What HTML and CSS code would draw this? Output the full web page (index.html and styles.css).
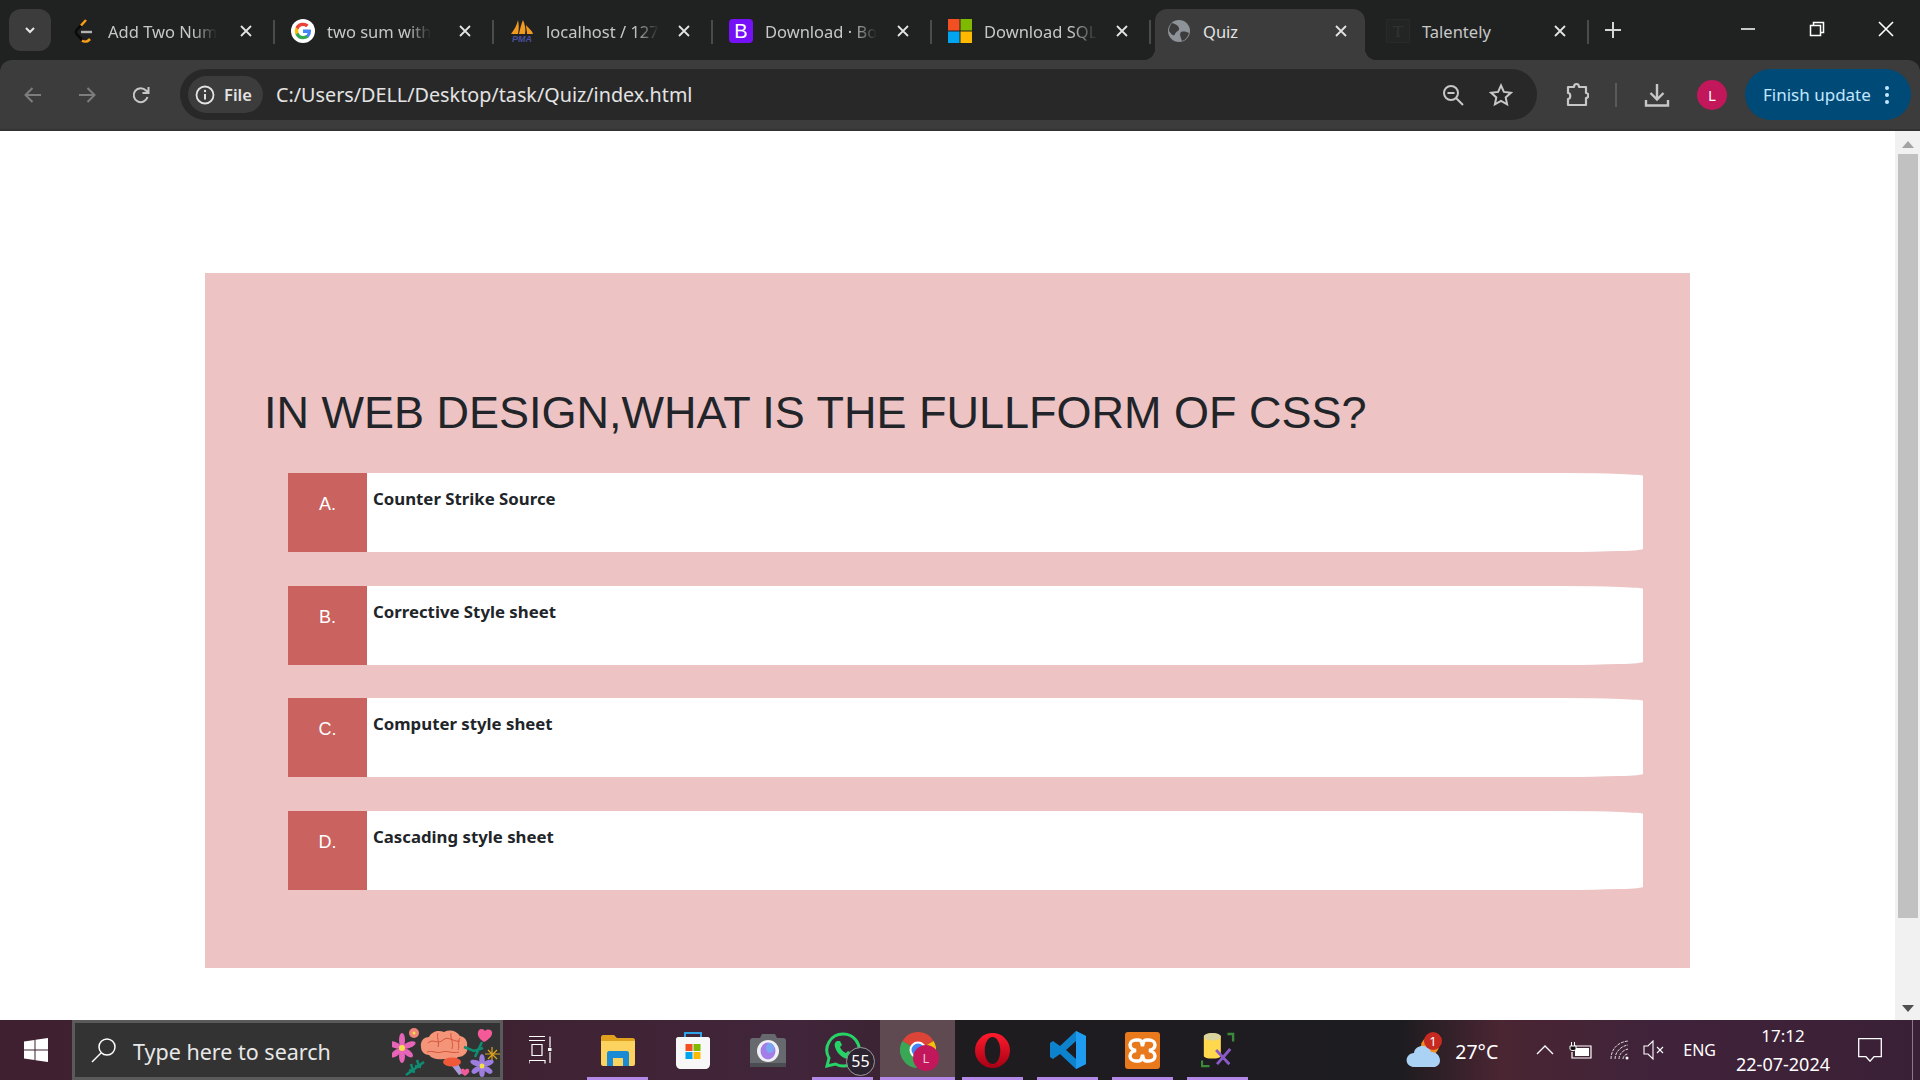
FILE: index.html
```html
<!DOCTYPE html>
<html lang="en">
<head>
  <meta charset="UTF-8">
  <title>Quiz</title>
  <link rel="stylesheet" href="styles.css">
</head>
<body>
  <!-- Tab strip -->
  <div class="tabbar">
    <div class="tab-search">
      <svg width="14" height="14" viewBox="0 0 14 14"><path d="M3 5l4 4 4-4" fill="none" stroke="#e8e8e8" stroke-width="2"/></svg>
    </div>
    <div class="tabs">
      <div class="tab">
        <svg class="favicon" viewBox="0 0 24 24"><path d="M14 1L5 10.500c-1.300 1.500-1.300 3.500 0 5L11 22" fill="none" stroke="#0a0a0a" stroke-width="2.600"/><path d="M14 1L9 6.500M10 21.500c2 1.500 5 1.500 7-.5l1-1" fill="none" stroke="#f89f1b" stroke-width="2.600"/><path d="M9 13h11" stroke="#b3b3b3" stroke-width="2.400"/></svg>
        <span class="tab-title">Add Two Num</span>
        <svg class="tab-close" viewBox="0 0 12 12"><path d="M1 1l10 10M11 1L1 11"/></svg>
      </div>
      <div class="tab">
        <svg class="favicon" viewBox="0 0 24 24"><circle cx="12" cy="12" r="12" fill="#fff"/><path d="M20 12.300c0-.6 0-1.200-.2-1.700H12v3.300h4.500a3.900 3.900 0 0 1-1.700 2.500v2h2.700c1.600-1.500 2.500-3.600 2.500-6.100z" fill="#4285f4"/><path d="M12 20.300c2.200 0 4.100-.7 5.500-2l-2.700-2.100c-.7.500-1.700.8-2.800.8-2.200 0-4-1.500-4.600-3.400H4.600v2.100a8.300 8.300 0 0 0 7.400 4.600z" fill="#34a853"/><path d="M7.400 13.600a5 5 0 0 1 0-3.200V8.300H4.600a8.300 8.300 0 0 0 0 7.400z" fill="#fbbc05"/><path d="M12 7c1.200 0 2.300.4 3.200 1.200l2.400-2.400A8.300 8.300 0 0 0 4.600 8.300l2.800 2.100C8 8.500 9.800 7 12 7z" fill="#ea4335"/></svg>
        <span class="tab-title">two sum with</span>
        <svg class="tab-close" viewBox="0 0 12 12"><path d="M1 1l10 10M11 1L1 11"/></svg>
      </div>
      <div class="tab">
        <svg class="favicon" viewBox="0 0 24 24"><path d="M1 15C4 11 7 6 8 1c1 5 1 9 0 14zM9 15c1-5 2-9 4-14 2 5 3 9 2 14zM17 15c0-4-1-6-1-9 2 3 6 5 7 9z" fill="#f29a1f"/><text x="12" y="22.500" text-anchor="middle" class="pma-text">PMA</text></svg>
        <span class="tab-title">localhost / 127</span>
        <svg class="tab-close" viewBox="0 0 12 12"><path d="M1 1l10 10M11 1L1 11"/></svg>
      </div>
      <div class="tab">
        <svg class="favicon" viewBox="0 0 24 24"><rect width="24" height="24" rx="4" fill="#7510f7"/><text x="12" y="19" text-anchor="middle" class="b-text">B</text></svg>
        <span class="tab-title">Download · Bo</span>
        <svg class="tab-close" viewBox="0 0 12 12"><path d="M1 1l10 10M11 1L1 11"/></svg>
      </div>
      <div class="tab">
        <svg class="favicon" viewBox="0 0 24 24"><rect width="11.500" height="11.500" fill="#f25022"/><rect x="12.500" width="11.500" height="11.500" fill="#7fba00"/><rect y="12.500" width="11.500" height="11.500" fill="#00a4ef"/><rect x="12.500" y="12.500" width="11.500" height="11.500" fill="#ffb900"/></svg>
        <span class="tab-title">Download SQL</span>
        <svg class="tab-close" viewBox="0 0 12 12"><path d="M1 1l10 10M11 1L1 11"/></svg>
      </div>
      <div class="tab tab-active">
        <svg class="favicon" viewBox="0 0 24 24"><circle cx="12" cy="12" r="11" fill="#8e9399"/><path d="M5 4c3 1 6 2 7 5s-3 3-4 6-4 0-6-3c0-3 1-6 3-8zM14 13c3-1 6 0 8 1-1 4-4 7-7 8-1-3-3-7-1-9z" fill="#3c3c3c"/></svg>
        <span class="tab-title">Quiz</span>
        <svg class="tab-close" viewBox="0 0 12 12"><path d="M1 1l10 10M11 1L1 11"/></svg>
      </div>
      <div class="tab tab-last">
        <svg class="favicon" viewBox="0 0 24 24"><rect x=".5" y=".5" width="23" height="23" fill="#232525" stroke="#282a2a"/><text x="12" y="18" text-anchor="middle" class="t-text">T</text></svg>
        <span class="tab-title">Talentely</span>
        <svg class="tab-close" viewBox="0 0 12 12"><path d="M1 1l10 10M11 1L1 11"/></svg>
      </div>
    </div>
    <svg class="newtab" width="16" height="16" viewBox="0 0 16 16"><path d="M8 0v16M0 8h16" stroke="#d6d6d6" stroke-width="2"/></svg>
    <div class="window-btns">
      <svg width="16" height="16" viewBox="0 0 16 16"><path d="M1 8h14" stroke="#fff" stroke-width="1.500"/></svg>
      <svg width="16" height="16" viewBox="0 0 16 16"><path d="M1.500 4.500h10v10h-10zM4.500 4.500v-3h10v10h-3" fill="none" stroke="#fff" stroke-width="1.500"/></svg>
      <svg width="16" height="16" viewBox="0 0 16 16"><path d="M1 1l14 14M15 1L1 15" stroke="#fff" stroke-width="1.600"/></svg>
    </div>
  </div>

  <!-- Toolbar -->
  <div class="toolbar">
    <div class="nav-btns">
      <svg width="20" height="20" viewBox="0 0 20 20"><path d="M18 10H3M9.500 3L2.500 10l7 7" fill="none" stroke="#7d7d7d" stroke-width="2"/></svg>
      <svg width="20" height="20" viewBox="0 0 20 20"><path d="M2 10h15M10.500 3l7 7-7 7" fill="none" stroke="#7d7d7d" stroke-width="2"/></svg>
      <svg width="20" height="20" viewBox="0 0 20 20"><path d="M16.500 12a7 7 0 1 1-1.500-6.500L17 7.500M17.500 2v6h-6" fill="none" stroke="#c7c7c7" stroke-width="2"/></svg>
    </div>
    <div class="omnibox">
      <div class="chip">
        <svg width="20" height="20" viewBox="0 0 20 20"><circle cx="10" cy="10" r="8.500" fill="none" stroke="#e3e3e3" stroke-width="1.800"/><path d="M10 9v5.500" stroke="#e3e3e3" stroke-width="2"/><circle cx="10" cy="6" r="1.200" fill="#e3e3e3"/></svg>
        <span>File</span>
      </div>
      <span class="url">C:/Users/DELL/Desktop/task/Quiz/index.html</span>
      <div class="omni-icons">
        <svg width="22" height="22" viewBox="0 0 22 22"><circle cx="9" cy="9" r="7" fill="none" stroke="#c7c7c7" stroke-width="2"/><path d="M5.500 9h7M14 14l7 7" fill="none" stroke="#c7c7c7" stroke-width="2"/></svg>
        <svg width="24" height="24" viewBox="0 0 24 24"><path d="M12 2.500l2.900 6.400 7 .8-5.200 4.700 1.400 6.900-6.100-3.500-6.100 3.500 1.400-6.900-5.200-4.700 7-.8z" fill="none" stroke="#c7c7c7" stroke-width="2"/></svg>
      </div>
    </div>
    <svg class="ext-icon" width="24" height="26" viewBox="0 0 24 26"><path d="M3 5h6c0-4 5-4 5 0h7v6c3 0 3 5 0 5v7H3v-6c3 0 3-6 0-6z" fill="none" stroke="#c7c7c7" stroke-width="2.200" stroke-linejoin="round"/></svg>
    <div class="tool-divider"></div>
    <svg class="dl-icon" width="26" height="26" viewBox="0 0 26 26"><path d="M13 2v15M6.500 11l6.500 6.500 6.500-6.500M2 18v5.500h22V18" fill="none" stroke="#c7c7c7" stroke-width="2.400"/></svg>
    <div class="avatar">L</div>
    <div class="update-pill">
      <span>Finish update</span>
      <svg width="6" height="20" viewBox="0 0 6 20"><circle cx="3" cy="3" r="2" fill="#c2e7ff"/><circle cx="3" cy="10" r="2" fill="#c2e7ff"/><circle cx="3" cy="17" r="2" fill="#c2e7ff"/></svg>
    </div>
  </div>

  <!-- Page -->
  <div class="viewport">
    <div class="page">
      <div class="quiz-card">
        <h1 class="question">IN WEB DESIGN,WHAT IS THE FULLFORM OF CSS?</h1>
        <div class="options">
          <div class="option"><div class="opt-label">A.</div><div class="opt-text">Counter Strike Source</div></div>
          <div class="option"><div class="opt-label">B.</div><div class="opt-text">Corrective Style sheet</div></div>
          <div class="option"><div class="opt-label">C.</div><div class="opt-text">Computer style sheet</div></div>
          <div class="option"><div class="opt-label">D.</div><div class="opt-text">Cascading style sheet</div></div>
        </div>
      </div>
    </div>
    <div class="scrollbar">
      <div class="arrow-up"></div>
      <div class="thumb"></div>
      <div class="arrow-down"></div>
    </div>
  </div>

  <!-- Taskbar -->
  <div class="taskbar">
    <div class="start">
      <svg width="24" height="24" viewBox="0 0 24 24"><path d="M0 3.500l10.500-1.500v9.500H0zM11.500 1.800L24 0v11.500H11.500zM0 12.500h10.500V22L0 20.500zM11.500 12.500H24V24l-12.500-1.800z" fill="#fff"/></svg>
    </div>
    <div class="search">
      <svg width="26" height="26" viewBox="0 0 26 26"><circle cx="16" cy="10" r="8" fill="none" stroke="#fff" stroke-width="1.500"/><path d="M10 16L1 25" stroke="#fff" stroke-width="1.500"/></svg>
      <span class="search-text">Type here to search</span>
      <svg class="doodle" width="108" height="54" viewBox="0 0 108 54">
        <path d="M56 38l11 14 4-2-7-13z" fill="#a99ad8"/>
        <path d="M29 24c-1-6 3-10 8-10 3-6 10-7 15-5 6-3 13-1 16 4 5 1 8 5 7 10 2 6-3 11-9 11-4 4-10 4-14 2-6 1-12 0-15-4-5 0-8-4-8-8z" fill="#f49478"/>
        <path d="M36 20c5-5 10 2 15-3s12 3 17 1M35 29c6-2 10 2 15 0s10 2 17 0M46 10c-2 5 2 8 0 14M59 10c-1 6 3 9 1 16M68 15c-3 4 0 8-2 12" fill="none" stroke="#d4573f" stroke-width="1"/>
        <ellipse cx="60" cy="39" rx="9" ry="4.500" fill="#f0583a"/>
        <g fill="#e764b8">
          <ellipse cx="10" cy="17" rx="3" ry="7"/><ellipse cx="10" cy="33" rx="3" ry="7"/>
          <ellipse cx="3" cy="22" rx="3" ry="7" transform="rotate(-70 3 22)"/><ellipse cx="17" cy="22" rx="3" ry="7" transform="rotate(70 17 22)"/>
          <ellipse cx="4" cy="30" rx="3" ry="6" transform="rotate(50 4 30)"/><ellipse cx="16" cy="30" rx="3" ry="6" transform="rotate(-50 16 30)"/>
        </g>
        <circle cx="10" cy="25" r="3" fill="#f5e04a"/>
        <circle cx="22" cy="10" r="5" fill="#f08478"/><circle cx="22" cy="10" r="1.500" fill="#f5e04a"/>
        <path d="M92 19c-5-3-8-8-5-12 2-2 5-1 6 1 2-2 6-2 7 1 1 4-4 8-8 10z" fill="#f45a98"/>
        <path d="M90 19L83 34M72 24l10 4 9-3" fill="none" stroke="#0f8c72" stroke-width="2.500"/>
        <path d="M96 27l9 9M105 27l-9 9M100 24v15M93 31h15" stroke="#dea51d" stroke-width="1.200"/>
        <g fill="#9d7ee0">
          <ellipse cx="90" cy="37" rx="2.800" ry="6"/><ellipse cx="90" cy="49" rx="2.800" ry="5"/>
          <ellipse cx="84" cy="40" rx="2.800" ry="6" transform="rotate(-70 84 40)"/><ellipse cx="96" cy="40" rx="2.800" ry="6" transform="rotate(70 96 40)"/>
          <ellipse cx="84" cy="47" rx="2.800" ry="5" transform="rotate(55 84 47)"/><ellipse cx="96" cy="47" rx="2.800" ry="5" transform="rotate(-55 96 47)"/>
        </g>
        <circle cx="90" cy="43" r="2.500" fill="#f5e04a"/>
        <path d="M73 53c-3-2-5-4-4-6 1-2 3-1 4 0 1-1 3-2 4 0 1 2-1 4-4 6z" fill="#f45a98"/>
        <path d="M14 52l18-13M19 41l2 7M25 37l2 6M17 47l6 2M23 43l6 1" stroke="#0f8c72" stroke-width="2.500"/>
      </svg>
    </div>
    <div class="task-btn task-view">
      <svg width="24" height="28" viewBox="0 0 24 28"><path d="M0 .5h16M0 4.500h16M3 8.500h10v11H3zM0 27.500v-3h16v3M21 .5v11M21 16v11" fill="none" stroke="#fff" stroke-width="1.200"/><rect x="19" y="12" width="3.500" height="3" fill="#fff"/></svg>
    </div>
    <div class="task-btn running">
      <svg width="34" height="32" viewBox="0 0 34 32"><path d="M0 3c0-1 1-2 2-2h11l3 3h16c1 0 2 1 2 2v8H0z" fill="#e0a11e"/><path d="M0 7h34v23c0 1-1 2-2 2H2c-1 0-2-1-2-2z" fill="#fdd35f"/><path d="M6 32V19c0-1 1-2 2-2h18c1 0 2 1 2 2v13h-6v-8H12v8z" fill="#1a8ad4"/></svg>
    </div>
    <div class="task-btn">
      <svg width="36" height="38" viewBox="0 0 36 38"><path d="M10 8V2h16v6" fill="none" stroke="#2fa3e8" stroke-width="2"/><path d="M3 6h30c1 0 2 1 2 2v25c0 3-2 5-5 5H6c-3 0-5-2-5-5V8c0-1 1-2 2-2z" fill="#f7f7f7"/><rect x="10.500" y="13" width="7" height="7" fill="#f25022"/><rect x="18.500" y="13" width="7" height="7" fill="#7fba00"/><rect x="10.500" y="21" width="7" height="7" fill="#00a4ef"/><rect x="18.500" y="21" width="7" height="7" fill="#ffb900"/></svg>
    </div>
    <div class="task-btn">
      <svg width="36" height="36" viewBox="0 0 36 36"><path d="M3 6h7l2-4h13l2 4h6c2 0 3 1 3 3v23c0 2-1 3-3 3H3c-2 0-3-1-3-3V9c0-2 1-3 3-3z" fill="#66696e"/><rect y="31" width="36" height="4" fill="#4a4d51"/><circle cx="18" cy="19" r="11" fill="#f0f0f4"/><ellipse cx="18" cy="19" rx="7.500" ry="8.500" fill="#a37de8"/><ellipse cx="20" cy="16" rx="4" ry="5" fill="#7aa8f0"/></svg>
    </div>
    <div class="task-btn running">
      <svg width="36" height="36" viewBox="0 0 36 36"><path d="M18 2a16 16 0 0 0-14 24L2 34l8.500-2A16 16 0 1 0 18 2z" fill="none" stroke="#25d366" stroke-width="3"/><path d="M12 9c-2 1-3 3-2 6 2 6 6 10 12 12 3 0 5-1 6-3l-1-3-4-2-2 2c-3-1-5-4-6-6l2-2-2-4z" fill="#25d366"/></svg>
      <span class="wa-badge">55</span>
    </div>
    <div class="task-btn running current">
      <svg width="36" height="36" viewBox="0 0 36 36"><path d="M18 18L2.400 9A18 18 0 0 1 33.600 9z" fill="#db4437"/><path d="M18 18L33.600 9A18 18 0 0 1 18 36z" fill="#f4c20d"/><path d="M18 18L18 36A18 18 0 0 1 2.400 9z" fill="#3aa757"/><circle cx="18" cy="18" r="8.500" fill="#fff"/><circle cx="18" cy="18" r="6.500" fill="#4285f4"/></svg>
      <span class="chrome-badge">L</span>
    </div>
    <div class="task-btn running">
      <svg width="35" height="37" viewBox="0 0 36 36"><defs><linearGradient id="operaRed" x1="0" y1="0" x2="0" y2="1"><stop offset="0" stop-color="#ff1b2d"/><stop offset="1" stop-color="#a70014"/></linearGradient></defs><path fill-rule="evenodd" d="M18 0a18 18 0 1 0 0 36 18 18 0 0 0 0-36zm0 4c-4.500 0-8 6-8 14s3.500 14 8 14 8-6 8-14-3.500-14-8-14z" fill="url(#operaRed)"/></svg>
    </div>
    <div class="task-btn running">
      <svg width="36" height="38" viewBox="0 0 36 38"><path d="M26 0l10 5v28l-10 5-16-15-7 5-3-2V12l3-2 7 5zM26 10l-10 9 10 9z" fill="#0e83cd"/><path d="M26 0l10 5v28l-10 5z" fill="#1f9cf0"/></svg>
    </div>
    <div class="task-btn running">
      <svg width="35" height="37" viewBox="0 0 35 37"><rect width="35" height="37" rx="3" fill="#e8791c"/><path d="M11 8h3c3 0 3 4 3.500 6 .5-2 .5-6 3.500-6h3c3 0 6 2 6 5s-3 5-6 5.500c3 .5 6 2.500 6 5.500s-3 5-6 5h-3c-3 0-3-4-3.500-6-.5 2-.5 6-3.500 6h-3c-3 0-6-2-6-5s3-5 6-5.500c-3-.5-6-2.500-6-5.500s3-5 6-5z" fill="none" stroke="#fff" stroke-width="3.500"/></svg>
    </div>
    <div class="task-btn running">
      <svg width="34" height="36" viewBox="0 0 36 38"><path d="M28 2h6v8M1 30v6h8" fill="none" stroke="#3a8a3a" stroke-width="2.500"/><path d="M3 5c0-5 18-5 18 0v20c0 4-18 4-18 0z" fill="#ffd84d"/><ellipse cx="12" cy="5" rx="9" ry="4" fill="#d9d3a0"/><path d="M16 19l14 15M31 18L17 34" stroke="#8a5ac8" stroke-width="3"/></svg>
    </div>
    <div class="tray">
      <div class="weather">
        <svg width="38" height="36" viewBox="0 0 38 36"><circle cx="24" cy="14" r="9" fill="#f08a24"/><path d="M9 35c-11 0-11-13-1-14 1-9 15-9 17-1 10-1 13 15 2 15z" fill="#a9d2f5"/><circle cx="27" cy="9" r="9" fill="#c62a20"/><text x="27" y="13.500" text-anchor="middle" class="badge-text">1</text></svg>
        <span class="temp">27°C</span>
      </div>
      <svg class="tray-chevron" width="18" height="10" viewBox="0 0 18 10"><path d="M1 9l8-8 8 8" fill="none" stroke="#fff" stroke-width="1.300"/></svg>
      <svg class="tray-battery" width="24" height="18" viewBox="0 0 24 18"><path d="M6 5h16v12H3v-6" fill="none" stroke="#fff" stroke-width="1.200"/><rect x="6" y="7" width="14" height="8" fill="#fff"/><path d="M1 5h6v3c0 2-6 2-6 0zM2.500 1v4M5.500 1v4" fill="#111" stroke="#fff"/></svg>
      <svg class="tray-wifi" width="20" height="20" viewBox="0 0 20 20"><path d="M1 19C1 9 8 2 18 1M5 19c0-7 6-13 13-14M9 19c0-5 4-9 9-10M13 19c0-2 2-5 5-5" fill="none" stroke="#ddd" stroke-width="1" stroke-dasharray="3 1"/><circle cx="17" cy="18" r="1.500" fill="#fff"/></svg>
      <svg class="tray-sound" width="22" height="20" viewBox="0 0 22 20"><path d="M1 6h4l5-5v18l-5-5H1z" fill="none" stroke="#fff" stroke-width="1.100"/><path d="M14 7l6 6M20 7l-6 6" stroke="#fff" stroke-width="1.100"/></svg>
      <span class="lang">ENG</span>
      <div class="clock"><span class="clock-time">17:12</span><span>22-07-2024</span></div>
      <svg class="notify" width="24" height="24" viewBox="0 0 24 24"><path d="M.7.7h22.600v18H16l-4 4.500-4-4.500H.7z" fill="none" stroke="#fff" stroke-width="1.300"/></svg>
      <div class="show-desktop"></div>
    </div>
  </div>
</body>
</html>
```

FILE: styles.css
```css
* {
  box-sizing: border-box;
}
html, body {
  margin: 0;
  height: 1080px;
  overflow: hidden;
}
body {
  display: flex;
  flex-direction: column;
  font-family: "Noto Sans", sans-serif;
  background-color: #202222;
}

/* tab strip */
.tabbar {
  height: 60px;
  background-color: #202222;
  display: flex;
  align-items: flex-end;
}
.tab-search {
  width: 42px;
  height: 42px;
  margin: 0 9px 9px 9px;
  border-radius: 12px;
  background-color: #3c3c3c;
  display: flex;
  align-items: center;
  justify-content: center;
}
.tabs {
  display: flex;
}
.tab {
  position: relative;
  width: 210px;
  height: 51px;
  margin-right: 9px;
  padding: 0 18px 7px 12px;
  display: flex;
  align-items: center;
  color: #c7c7c7;
  font-size: 16.500px;
}
.tab::after {
  content: "";
  position: absolute;
  right: -5px;
  top: 11px;
  width: 2px;
  height: 24px;
  background-color: #4a4c4c;
}
.tab-active {
  background-color: #3c3c3c;
  border-radius: 12px 12px 0 0;
  color: #e3e3e3;
}
.tab-active::after {
  display: none;
}
.tab-active::before {
  content: "";
  position: absolute;
  left: -12px;
  right: -12px;
  bottom: 0;
  height: 12px;
  background:
    radial-gradient(circle at 0 0, #202222 12px, #3c3c3c 12.500px) left / 12px 12px no-repeat,
    radial-gradient(circle at 100% 0, #202222 12px, #3c3c3c 12.500px) right / 12px 12px no-repeat;
}
.favicon {
  position: relative;
  width: 24px;
  height: 24px;
  flex: none;
  margin-right: 12px;
}
.tab-title {
  position: relative;
  flex: none;
  white-space: nowrap;
  -webkit-mask-image: linear-gradient(to right, #000 78%, transparent 100%);
  mask-image: linear-gradient(to right, #000 78%, transparent 100%);
}
.tab-active .tab-title, .tab-last .tab-title {
  -webkit-mask-image: none;
  mask-image: none;
}
.tab-close {
  position: relative;
  margin-left: auto;
  flex: none;
  width: 12px;
  height: 12px;
  fill: none;
  stroke: #e3e3e3;
  stroke-width: 1.800;
}
.pma-text {
  font: italic bold 9px "Liberation Sans", sans-serif;
  fill: #4a4fa0;
}
.b-text {
  font: 20px "Liberation Sans", sans-serif;
  fill: #fff;
}
.t-text {
  font: 17px "Liberation Serif", serif;
  fill: #333;
}
.newtab {
  margin: 0 0 22px 12px;
}
.window-btns {
  margin-left: auto;
  width: 195px;
  height: 60px;
  display: flex;
  align-items: center;
  justify-content: space-between;
  padding: 0 26px 2px 15px;
  align-self: flex-start;
}

/* toolbar */
.toolbar {
  height: 71px;
  background-color: #3c3c3c;
  border-radius: 12px 12px 0 0;
  border-bottom: 2px solid #333;
  display: flex;
  align-items: center;
  padding: 0 9px 0 0;
}
.nav-btns {
  width: 180px;
  flex: none;
  display: flex;
  justify-content: space-between;
  padding: 0 29px 0 23px;
}
.omnibox {
  width: 1357px;
  height: 51px;
  border-radius: 26px;
  background-color: #282828;
  display: flex;
  align-items: center;
  padding: 0 24px 0 8px;
  color: #e3e3e3;
}
.chip {
  width: 75px;
  height: 37px;
  border-radius: 19px;
  background-color: #3c3c3c;
  display: flex;
  align-items: center;
  gap: 9px;
  padding-left: 7px;
  font-size: 16.500px;
  font-weight: 600;
}
.url {
  margin-left: 13px;
  font-size: 19.750px;
}
.omni-icons {
  margin-left: auto;
  display: flex;
  align-items: center;
  gap: 25px;
}
.ext-icon {
  margin-left: 28px;
}
.tool-divider {
  width: 2px;
  height: 24px;
  background-color: #5a5a5a;
  margin: 0 27px 0 26px;
}
.avatar {
  width: 30px;
  height: 30px;
  margin-left: 27px;
  border-radius: 50%;
  background-color: #c2185b;
  color: #fff;
  font-size: 15px;
  display: flex;
  align-items: center;
  justify-content: center;
}
.update-pill {
  width: 166px;
  height: 51px;
  margin-left: 18px;
  border-radius: 26px;
  background-color: #004a77;
  color: #c2e7ff;
  font-size: 17px;
  display: flex;
  align-items: center;
  justify-content: space-between;
  padding: 0 21px 0 18px;
}

/* page */
.viewport {
  flex: 1;
  display: flex;
  min-height: 0;
  background-color: #fff;
}
.page {
  flex: 1;
  padding: 142px 0 0 205px;
}
.quiz-card {
  width: 1485px;
  height: 695px;
  background-color: #edc3c4;
  padding: 112px 0 0 59px;
}
.question {
  margin: 0 0 33px 0;
  font-family: "Liberation Sans", Arial, sans-serif;
  font-weight: 400;
  font-size: 45px;
  line-height: 55px;
  color: #212529;
}
.options {
  margin-left: 24px;
  width: 1355px;
}
.option {
  height: 79px;
  margin-bottom: 33.700px;
  display: flex;
  background-color: #fff;
  border-top-right-radius: 80px 3px;
  border-bottom-right-radius: 80px 3px;
}
.opt-label {
  width: 79px;
  background-color: #ca625f;
  color: #fff;
  font-family: "Liberation Sans", Arial, sans-serif;
  font-size: 18px;
  text-align: center;
  padding-top: 21px;
}
.opt-text {
  padding: 14px 0 0 6px;
  font-size: 16.800px;
  font-weight: 700;
  color: #212529;
}
.scrollbar {
  width: 25px;
  background-color: #f1f1f1;
  display: flex;
  flex-direction: column;
  align-items: center;
}
.thumb {
  width: 20px;
  height: 764px;
  margin: 6px 0 auto 0;
  background-color: #c1c1c1;
}
.arrow-up, .arrow-down {
  width: 0;
  height: 0;
  border-left: 6px solid transparent;
  border-right: 6px solid transparent;
}
.arrow-up {
  margin-top: 10px;
  border-bottom: 7px solid #a3a3a3;
}
.arrow-down {
  margin-bottom: 8px;
  border-top: 7px solid #505050;
}

/* taskbar */
.taskbar {
  height: 60px;
  display: flex;
  align-items: center;
  color: #fff;
  background: linear-gradient(to right, #3f2030 0, #3f2232 500px, #41253a 800px, #3c2434 880px, #1f1c20 960px, #1d1c20 1400px, #4a2532 1500px, #40233a 1650px, #3a2036 1920px);
}
.start {
  width: 72px;
  display: flex;
  justify-content: center;
}
.search {
  width: 431px;
  height: 60px;
  border: 3px solid #5a5a5a;
  background-color: #333;
  display: flex;
  align-items: center;
  padding-left: 16px;
}
.search-text {
  margin-left: 16px;
  font-size: 21.500px;
  color: #e8e8e8;
  padding-top: 2px;
}
.doodle {
  margin-left: auto;
}
.task-btn {
  position: relative;
  width: 75px;
  height: 60px;
  flex: none;
  display: flex;
  align-items: center;
  justify-content: center;
}
.task-view {
  margin-right: 2px;
}
.task-btn.running::after {
  content: "";
  position: absolute;
  left: 7px;
  right: 7px;
  bottom: 0;
  height: 3px;
  background-color: #b388e8;
}
.task-btn.current {
  background-color: #5e4a50;
}
.task-btn.current::after {
  left: 0;
  right: 0;
}
.wa-badge {
  position: absolute;
  left: 41px;
  bottom: 4px;
  width: 29px;
  height: 29px;
  border-radius: 50%;
  border: 1px solid #9a9a9a;
  background-color: #2b2430;
  font-size: 16px;
  text-align: center;
  line-height: 26px;
}
.chrome-badge {
  position: absolute;
  left: 33px;
  bottom: 9px;
  width: 26px;
  height: 26px;
  border-radius: 50%;
  background-color: #c2185b;
  font-size: 13px;
  text-align: center;
  line-height: 26px;
  color: #f2c4d6;
}
.tray {
  margin-left: auto;
  display: flex;
  align-items: center;
  height: 60px;
  position: relative;
  padding-right: 38px;
}
.weather {
  display: flex;
  align-items: center;
  gap: 11px;
}
.badge-text {
  font: 13px "Noto Sans", sans-serif;
  fill: #fff;
}
.temp {
  font-size: 19.500px;
  padding-top: 2px;
}
.tray-chevron {
  margin-left: 38px;
}
.tray-battery {
  margin-left: 15px;
}
.tray-wifi {
  margin-left: 17px;
}
.tray-sound {
  margin-left: 13px;
}
.lang {
  margin-left: 18px;
  font-size: 16px;
}
.clock {
  margin-left: 20px;
  width: 94px;
  display: flex;
  flex-direction: column;
  align-items: center;
  gap: 6px;
  font-size: 18px;
  line-height: 22px;
}
.clock-time {
  font-size: 17px;
}
.notify {
  margin-left: 28px;
}
.show-desktop {
  position: absolute;
  right: 7px;
  top: 0;
  width: 1px;
  height: 60px;
  background-color: #8a7a85;
}
```
